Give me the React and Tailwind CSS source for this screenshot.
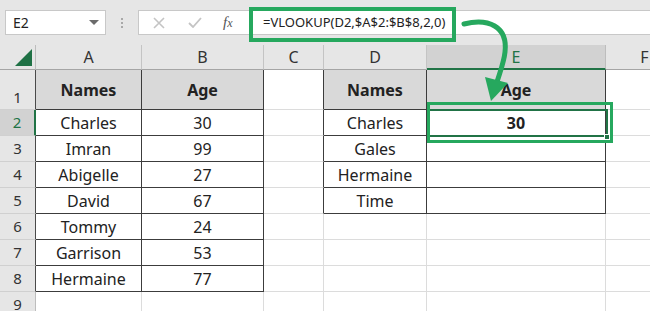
import React from "react";

const cols = ["A", "B", "C", "D", "E", "F"];

const data = {
    1: { A: "Names", B: "Age", D: "Names", E: "Age" },
    2: { A: "Charles", B: "30", D: "Charles", E: "30" },
    3: { A: "Imran", B: "99", D: "Gales" },
    4: { A: "Abigelle", B: "27", D: "Hermaine" },
    5: { A: "David", B: "67", D: "Time" },
    6: { A: "Tommy", B: "24" },
    7: { A: "Garrison", B: "53" },
    8: { A: "Hermaine", B: "77" },
    9: {},
};

// which cells sit inside one of the two bordered tables
const inTable = (r, c) =>
    ((c === "A" || c === "B") && r <= 8) || ((c === "D" || c === "E") && r <= 5);

const Cell = ({ r, c }) => {
    const t = inTable(r, c);
    const header = r === 1 && t;
    const rightDark = t || (c === "C" && r <= 5);
    const bold = header || (r === 2 && c === "E");
    return (
        <div
            className={`flex items-center justify-center border-r border-b text-[16px] text-[#222] ${
                rightDark ? "border-r-[#3c3c3c]" : "border-r-[#dcdcdc]"
            } ${t ? "border-b-[#3c3c3c]" : "border-b-[#dcdcdc]"} ${
                header ? "bg-[#d9d9d9]" : "bg-white"
            } ${bold ? "font-bold" : ""}`}
        >
            {data[r][c]}
        </div>
    );
};

export default function App() {
    return (
        <div
            className="relative w-[650px] h-[311px] overflow-hidden bg-white"
            style={{ fontFamily: '"Noto Sans", "Open Sans", sans-serif' }}
        >
            {/* Formula bar */}
            <div className="h-[45px] bg-[#e6e6e6] flex items-start pt-[10px]">
                <div className="ml-[5px] w-[101px] h-[25px] bg-white border border-[#c8c8c8] flex items-center justify-between pl-[7px] pr-[6px] text-[14px] text-[#222]">
                    <span>E2</span>
                    <span className="w-0 h-0 border-l-[5px] border-r-[5px] border-t-[5px] border-l-transparent border-r-transparent border-t-[#6b6b6b]" />
                </div>
                <div className="w-[32px] h-[25px] flex flex-col items-center justify-center gap-[2px]">
                    <span className="w-[2px] h-[2px] bg-[#a8a8a8]" />
                    <span className="w-[2px] h-[2px] bg-[#a8a8a8]" />
                    <span className="w-[2px] h-[2px] bg-[#a8a8a8]" />
                </div>
                <div className="flex-1 h-[25px] bg-white border border-[#c8c8c8] border-r-0 flex items-center">
                    <div className="w-[111px] h-full flex items-center border-r border-[#c8c8c8]">
                        <svg width="12" height="12" viewBox="0 0 12 12" className="ml-[14px]">
                            <path d="M1 1 L11 11 M11 1 L1 11" stroke="#c4c4c4" strokeWidth="1.6" />
                        </svg>
                        <svg width="14" height="11" viewBox="0 0 14 11" className="ml-[23px]">
                            <path d="M1 6 L5 10 L13 1" stroke="#c4c4c4" strokeWidth="1.8" fill="none" />
                        </svg>
                        <span
                            className="ml-[21px] text-[15px] italic text-[#555]"
                            style={{ fontFamily: '"Liberation Serif", serif' }}
                        >
                            f<span className="text-[12px]">x</span>
                        </span>
                    </div>
                    <span className="ml-[13px] text-[13px] text-[#222]">=VLOOKUP(D2,$A$2:$B$8,2,0)</span>
                </div>
            </div>

            {/* Sheet grid */}
            <div className="grid grid-cols-[36px_106px_122px_60px_103px_179px_78px] grid-rows-[25px_40px_repeat(8,26px)]">
                <div className="bg-[#e6e6e6] border-r border-b border-r-[#bdbdbd] border-b-[#a5a5a5] relative">
                    <div className="absolute right-[3px] bottom-[3px] w-0 h-0 border-l-[17px] border-t-[17px] border-l-transparent border-t-transparent border-b-0 border-r-0 border-[#1f7145] [border-bottom:17px_solid_#1f7145]" />
                </div>
                {cols.map((c) =>
                    c === "E" ? (
                        <div
                            key={c}
                            className="bg-[#d2d2d2] border-r border-r-[#bdbdbd] border-b-2 border-b-[#217346] flex items-center justify-center text-[16px] text-[#217346]"
                        >
                            {c}
                        </div>
                    ) : (
                        <div
                            key={c}
                            className="bg-[#e6e6e6] border-r border-b border-r-[#c4c4c4] border-b-[#a5a5a5] flex items-center justify-center text-[16px] text-[#333]"
                        >
                            {c}
                        </div>
                    )
                )}
                {[1, 2, 3, 4, 5, 6, 7, 8, 9].map((r) => (
                    <React.Fragment key={r}>
                        <div
                            className={`border-b border-b-[#d0d0d0] flex justify-center text-[15px] ${
                                r === 2
                                    ? "bg-[#d2d2d2] border-r-2 border-r-[#217346] text-[#217346] items-center"
                                    : `bg-[#e6e6e6] border-r text-[#333] ${
                                          r <= 8 ? "border-r-[#4a4a4a]" : "border-r-[#bdbdbd]"
                                      } ${r === 1 ? "items-end pb-[1px]" : "items-center"}`
                            }`}
                        >
                            {r}
                        </div>
                        {cols.map((c) => (
                            <Cell key={c} r={r} c={c} />
                        ))}
                    </React.Fragment>
                ))}
            </div>

            {/* native selection of E2 */}
            <div className="absolute left-[427px] top-[109px] w-[181px] h-[28px] border-2 border-[#217346] pointer-events-none" />
            <div className="absolute left-[604px] top-[134px] w-[6px] h-[6px] bg-[#217346] border border-white pointer-events-none" />

            {/* annotation boxes */}
            <div className="absolute left-[249px] top-[7px] w-[207px] h-[35px] border-[4px] border-[#26a85e] pointer-events-none" />
            <div className="absolute left-[427px] top-[102px] w-[186px] h-[41px] border-[3px] border-[#26a85e] pointer-events-none" />

            {/* arrow */}
            <svg className="absolute left-0 top-0 pointer-events-none" width="650" height="311" viewBox="0 0 650 311">
                <path
                    d="M464 24 C488 18 508 26 505 52 C504 62 500 72 497 82"
                    stroke="#26a85e"
                    strokeWidth="5"
                    fill="none"
                    strokeLinecap="round"
                />
                <path d="M485 77 L508 83 L491 101 Z" fill="#26a85e" />
            </svg>
        </div>
    );
}
